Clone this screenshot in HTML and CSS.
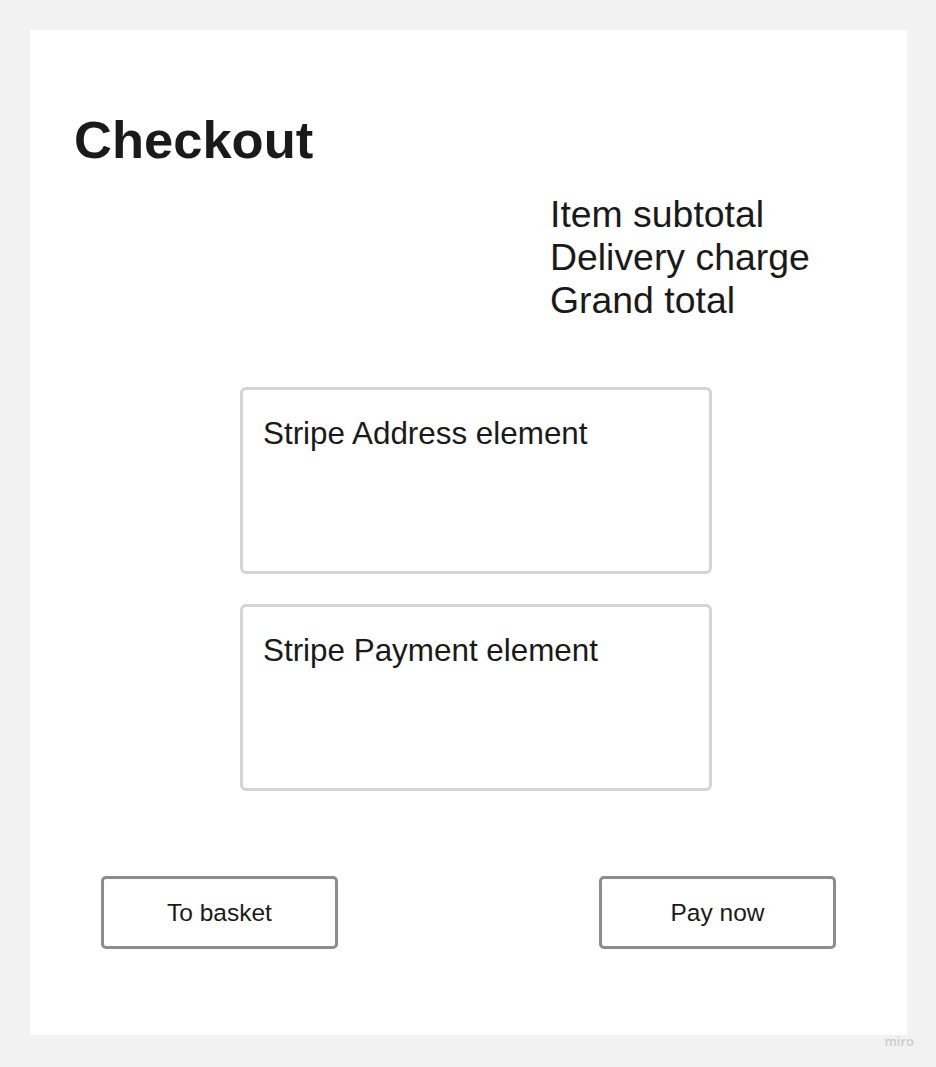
FILE: index.html
```html
<!DOCTYPE html>
<html>
<head>
<meta charset="utf-8">
<link rel="stylesheet" href="styles.css">
</head>
<body>
<div class="page">
  <main class="panel">
    <h1 class="title">Checkout</h1>
    <div class="summary">
      <div>Item subtotal</div>
      <div>Delivery charge</div>
      <div>Grand total</div>
    </div>
    <div class="elements">
      <div class="element">Stripe Address element</div>
      <div class="element">Stripe Payment element</div>
    </div>
    <div class="actions">
      <div class="btn">To basket</div>
      <div class="btn">Pay now</div>
    </div>
  </main>
  <div class="brand">miro</div>
</div>
</body>
</html>
```
FILE: styles.css
```css
html, body {
  margin: 0;
  padding: 0;
  background: #f2f2f2;
}
body {
  font-family: "Liberation Sans", Arial, sans-serif;
  color: #1a1a1a;
  width: 936px;
  height: 1067px;
  overflow: hidden;
}
.page {
  padding: 30px 29px 0 30px;
  height: 1067px;
  box-sizing: border-box;
}
.panel {
  background: #fff;
  height: 1005px;
  box-sizing: border-box;
  padding-top: 80px;
}
.title {
  margin: 0 0 0 44px;
  font-size: 52.5px;
  line-height: 60px;
  font-weight: bold;
}
.summary {
  margin: 23px 0 0 520px;
  font-size: 37.4px;
  line-height: 43px;
}
.elements {
  margin: 65px 0 0 210px;
  display: flex;
  flex-direction: column;
  gap: 30px;
}
.element {
  width: 472px;
  height: 187px;
  box-sizing: border-box;
  border: 3px solid #d4d4d4;
  border-radius: 6px;
  padding: 26px 20px 0 20px;
  font-size: 31.4px;
  line-height: 36px;
}
.actions {
  margin-top: 85px;
  padding: 0 71px;
  display: flex;
  justify-content: space-between;
}
.btn {
  width: 237px;
  height: 73px;
  box-sizing: border-box;
  border: 3px solid #8c8c8c;
  border-radius: 5px;
  display: flex;
  align-items: center;
  justify-content: center;
  font-size: 24.5px;
}
.brand {
  text-align: right;
  margin-right: -7px;
  font-family: "Open Sans", sans-serif;
  font-weight: 600;
  font-size: 13px;
  line-height: 12px;
  color: #cdcdcd;
}
```
